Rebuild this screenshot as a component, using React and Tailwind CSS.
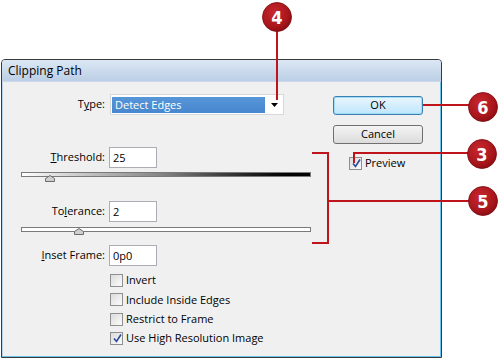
import React from "react";

const FONT = { fontFamily: '"Open Sans", "Noto Sans", sans-serif' };

function Check({ checked }) {
  return (
    <div className="w-[13px] h-[13px] border border-[#8e8f8f] bg-gradient-to-br from-[#dcdcdc] to-[#fbfbfb] p-[2px] flex">
      <div className="flex-1 bg-gradient-to-br from-[#e0e0e0] to-[#f8f8f8] flex items-center justify-center">
        {checked && (
          <svg width="9" height="9" viewBox="0 0 9 9">
            <path d="M1 4.5 L3.5 7.5 L8 0.5" fill="none" stroke="#2a4b9b" strokeWidth="1.6" />
          </svg>
        )}
      </div>
    </div>
  );
}

function Thumb() {
  return (
    <svg width="10" height="7" viewBox="0 0 10 7" className="block">
      <path d="M0.5 6.5 L0.5 3.5 L5 0.5 L9.5 3.5 L9.5 6.5 Z" fill="#cfcfcf" stroke="#6b6b6b" />
    </svg>
  );
}

function Circle({ cx, cy, n }) {
  return (
    <g>
      <circle cx={cx} cy={cy} r="14.5" fill="url(#rg)" stroke="#7a0a0f" strokeWidth="0.8" />
      <text
        x={cx}
        y={cy + 6.5}
        textAnchor="middle"
        fill="#ffffff"
        fontSize="18"
        fontWeight="bold"
        fontFamily='"DejaVu Sans Condensed", "DejaVu Sans", sans-serif'
      >
        {n}
      </text>
    </g>
  );
}

export default function App() {
  return (
    <div className="relative w-[500px] h-[360px] bg-white overflow-hidden text-[11px] text-black" style={FONT}>
      <div className="ml-[1px] pt-[59px]">
        <div className="w-[441px] h-[299px] border border-[#3a3a3a] rounded-t-[4px] bg-[#f0f0f0] shadow-[inset_-1px_-1px_0_#6cc2ea,inset_1px_0_0_#b9d3ec] flex flex-col overflow-hidden">
          <div className="h-[22px] bg-gradient-to-b from-[#dbe7f4] to-[#bccfe6] flex items-center pl-[6px] text-[12px] border-b border-[#c9d8ea]">
            Clipping Path
          </div>
          <div className="flex">
            {/* left column */}
            <div className="w-[331px] flex flex-col">
              <div className="mt-[12px] flex items-center h-[21px]">
                <div className="w-[103px] text-right">
                  T<u>y</u>pe:
                </div>
                <div className="ml-[5px] w-[174px] h-[21px] bg-white border border-[#d8d8d8] flex items-center pl-[1px]">
                  <div className="w-[153px] h-[16px] bg-gradient-to-b from-[#5696d8] to-[#4886cf] text-white pl-[3px] leading-[16px]">
                    Detect Edges
                  </div>
                  <div className="flex-1 flex justify-center">
                    <svg width="7" height="4" viewBox="0 0 7 4">
                      <path d="M0 0 H7 L3.5 4 Z" fill="#000" />
                    </svg>
                  </div>
                </div>
              </div>

              <div className="mt-[32px] flex items-center h-[21px]">
                <div className="w-[103px] text-right">
                  <u>T</u>hreshold:
                </div>
                <div className="ml-[4px] w-[48px] h-[21px] bg-white border border-[#abadb3] pl-[3px] leading-[19px]">25</div>
              </div>
              <div className="relative mt-[4px] ml-[19px] w-[290px] h-[5px] border border-[#7a7a7a] bg-gradient-to-r from-[#ffffff] via-[#808080] to-[#000000]">
                <div className="absolute left-[23px] top-[2px]">
                  <Thumb />
                </div>
              </div>

              <div className="mt-[24px] flex items-center h-[21px]">
                <div className="w-[103px] text-right">
                  To<u>l</u>erance:
                </div>
                <div className="ml-[4px] w-[48px] h-[21px] bg-white border border-[#abadb3] pl-[3px] leading-[19px]">2</div>
              </div>
              <div className="relative mt-[5px] ml-[19px] w-[290px] h-[5px] border border-[#7a7a7a] bg-white">
                <div className="absolute left-[52px] top-[0px]">
                  <Thumb />
                </div>
              </div>

              <div className="mt-[13px] flex items-center h-[21px]">
                <div className="w-[103px] text-right">
                  <u>I</u>nset Frame:
                </div>
                <div className="ml-[4px] w-[48px] h-[21px] bg-white border border-[#abadb3] pl-[3px] leading-[19px]">0p0</div>
              </div>

              <div className="mt-[5px] flex flex-col">
                {[
                  ["Invert", false],
                  ["Include Inside Edges", false],
                  ["Restrict to Frame", false],
                  ["Use High Resolution Image", true],
                ].map(([t, c]) => (
                  <div key={t} className="h-[19.3px] flex items-center ml-[108px]">
                    <Check checked={c} />
                    <span className="ml-[3px]">{t}</span>
                  </div>
                ))}
              </div>
            </div>

            {/* right column */}
            <div className="ml-[0px] w-[90px] flex flex-col">
              <div className="mt-[14px] h-[19px] rounded-[3px] border border-[#3c7fb1] bg-gradient-to-b from-[#eaf6fd] to-[#bee6fd] shadow-[inset_0_0_0_1px_#9fdcf8] flex items-center justify-center">
                OK
              </div>
              <div className="mt-[10px] h-[19px] rounded-[3px] border border-[#707070] bg-gradient-to-b from-[#f4f4f4] to-[#dcdcdc] flex items-center justify-center">
                Cancel
              </div>
              <div className="mt-[13px] ml-[16px] flex items-center h-[13px]">
                <Check checked={true} />
                <span className="ml-[3px]">Preview</span>
              </div>
            </div>
          </div>
        </div>
      </div>

      <svg className="absolute left-0 top-0 pointer-events-none" width="500" height="360" viewBox="0 0 500 360">
        <defs>
          <radialGradient id="rg" cx="0.4" cy="0.35" r="0.7">
            <stop offset="0" stopColor="#c7282e" />
            <stop offset="0.7" stopColor="#a8161c" />
            <stop offset="1" stopColor="#860c11" />
          </radialGradient>
        </defs>
        <g stroke="#c0141d" strokeWidth="2" fill="none">
          <path d="M277 31 V100" />
          <path d="M423 105 H470" />
          <path d="M354 163 V153 H470" />
          <path d="M312 153 H328 V243 H312 M328 201 H470" />
        </g>
        <Circle cx={277} cy={17} n="4" />
        <Circle cx={483} cy={107} n="6" />
        <Circle cx={482} cy={154} n="3" />
        <Circle cx={483} cy={201} n="5" />
      </svg>
    </div>
  );
}
